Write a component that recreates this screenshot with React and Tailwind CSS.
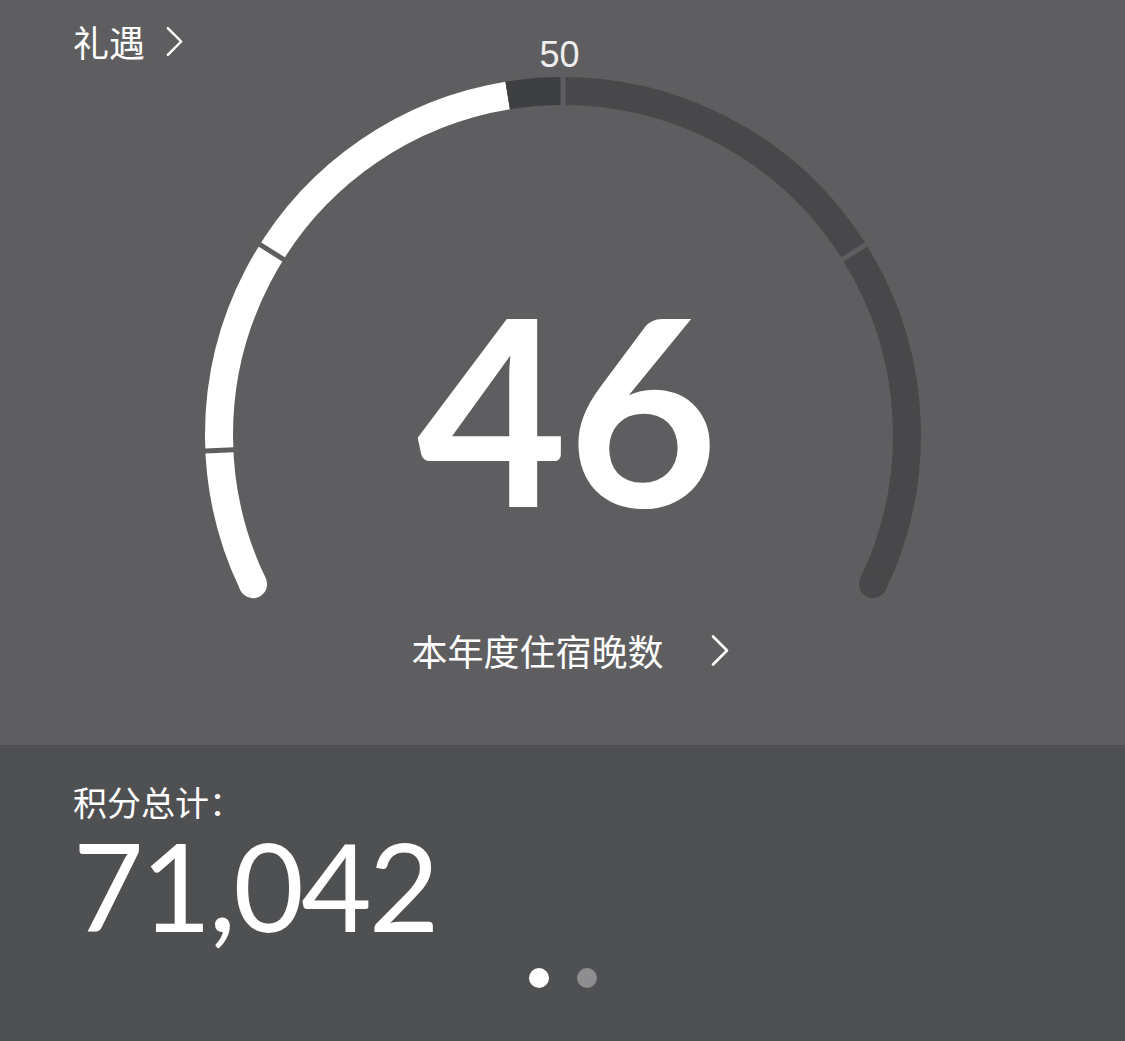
import React from 'react'

// gauge geometry, in page pixels
const CX = 562
const CY = 435
const R = 344
const START = 154.3
const SPAN = 231.4

const BG = '#5e5e60'
const TRACK = '#48484a'
const PENDING = '#3e3f41'

const pt = (v, r = R) => {
  const a = ((START + (SPAN * v) / 100) * Math.PI) / 180
  return [CX + r * Math.cos(a), CY + r * Math.sin(a)]
}

const arc = (v0, v1) => {
  const [x0, y0] = pt(v0)
  const [x1, y1] = pt(v1)
  const large = ((v1 - v0) * SPAN) / 100 > 180 ? 1 : 0
  return `M ${x0} ${y0} A ${R} ${R} 0 ${large} 1 ${x1} ${y1}`
}

const Chevron = ({ className }) => (
  <svg viewBox="0 0 20 32" className={className} fill="none">
    <polyline points="3,2 17,16 3,30" stroke="currentColor" strokeWidth="2.6" strokeLinecap="round" strokeLinejoin="round" />
  </svg>
)

const Gauge = ({ value, target, ticks }) => {
  const [sx, sy] = pt(0)
  const [ex, ey] = pt(100)
  return (
    <svg width="744" height="530" viewBox="190 72 744 530" className="block">
      <path d={arc(0, value)} stroke="#ffffff" strokeWidth="28" fill="none" />
      <path d={arc(value, target)} stroke={PENDING} strokeWidth="28" fill="none" />
      <path d={arc(target, 100)} stroke={TRACK} strokeWidth="28" fill="none" />
      <circle cx={sx} cy={sy} r="14" fill="#ffffff" />
      <circle cx={ex} cy={ey} r="14" fill={TRACK} />
      {ticks.map((t) => {
        const [x0, y0] = pt(t, R - 20)
        const [x1, y1] = pt(t, R + 20)
        return <line key={t} x1={x0} y1={y0} x2={x1} y2={y1} stroke={BG} strokeWidth="5" />
      })}
    </svg>
  )
}

export default function App() {
  return (
    <div
      className="flex h-[1041px] w-[1125px] flex-col overflow-hidden text-white"
      style={{ fontFamily: '"Noto Sans CJK SC", "Noto Sans", sans-serif' }}
    >
      <section className="h-[745px] bg-[#5e5e60]">
        <div className="relative h-[72px]">
          <a className="absolute left-[73px] top-[23px] flex items-center gap-[20px] text-[36px] leading-none">
            <span>礼遇</span>
            <Chevron className="h-[31px] w-[19px]" />
          </a>
          <div className="pt-[37px] text-center font-['Liberation_Sans',sans-serif] text-[36px] leading-none text-[#eeeeee]">
            <span className="relative left-[-3px]">50</span>
          </div>
        </div>

        <div className="relative mx-auto w-[744px]">
          <Gauge value={46} target={50} ticks={[10, 25, 50, 75]} />
          <div className="absolute inset-x-0 top-[204px] text-center font-['Lato',sans-serif] text-[260px] font-bold leading-none">
            <span className="relative left-[5px]">46</span>
          </div>
        </div>

        <a className="mt-[30px] flex items-center justify-center gap-[46px] text-[36px] leading-none">
          <span className="relative left-[8px]">本年度住宿晚数</span>
          <Chevron className="relative left-[8px] h-[33px] w-[20px]" />
        </a>
      </section>

      <section className="flex flex-1 flex-col bg-[#4f5052] px-[73px] pt-[40px]">
        <div className="text-[34px] leading-none">积分总计：</div>
        <div className="mt-[16px] h-[100px] font-['Lato',sans-serif] text-[122px] font-normal leading-[100px] tracking-[-3px]">
          71,042
        </div>
        <div className="mt-[33px] flex justify-center gap-[28px]">
          <span className="h-[20px] w-[20px] rounded-full bg-white" />
          <span className="h-[20px] w-[20px] rounded-full bg-[#8e8e90]" />
        </div>
      </section>
    </div>
  )
}
